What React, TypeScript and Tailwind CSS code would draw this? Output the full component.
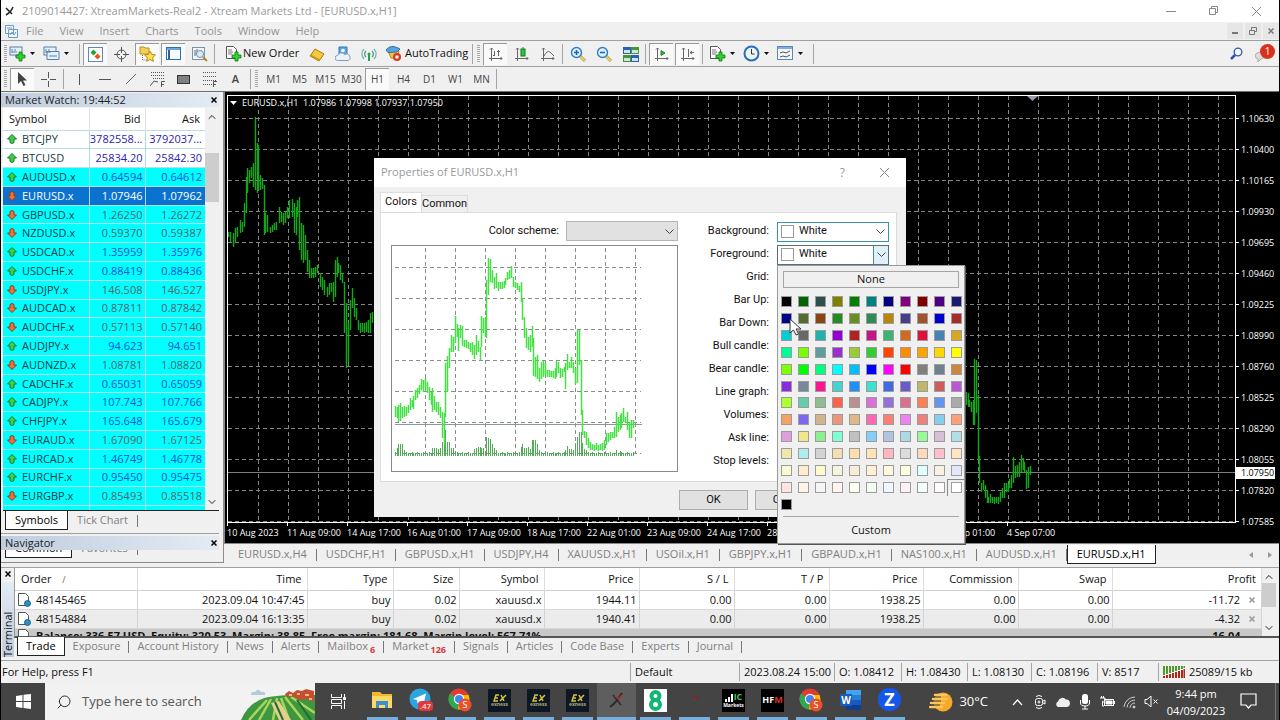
import { useState, type ReactNode } from "react";
import clsx from "clsx";
import { ChevronDown, ChevronUp, Search } from "lucide-react";

type Bar = [x: number, high: number, low: number];

// x, high, low in thirds of a pixel
const MAIN_LEFT: Bar[] = [
  [4, 412, 425], [10, 412, 440], [18, 415, 455], [24, 400, 445], [30, 395, 425], [38, 375, 415], [44, 380, 410], [50, 325, 395],
  [56, 245, 355], [60, 220, 295], [66, 225, 265], [72, 217, 250], [77, 205, 275], [83, 67, 285], [89, 145, 295], [94, 150, 285],
  [99, 240, 285], [105, 250, 283], [110, 270, 420], [115, 355, 415], [121, 360, 410], [128, 395, 415], [134, 390, 410], [141, 385, 405],
  [148, 380, 405], [155, 335, 385], [161, 350, 380], [168, 355, 390], [175, 350, 385], [181, 335, 370], [186, 315, 370], [194, 313, 365],
  [200, 325, 415], [206, 335, 420], [211, 315, 365], [216, 305, 465], [222, 385, 495], [228, 390, 505], [234, 420, 495], [240, 465, 530],
  [246, 495, 550], [252, 520, 550], [258, 520, 550], [264, 515, 545], [271, 510, 535], [278, 535, 575], [284, 545, 585], [291, 555, 600],
  [299, 575, 605], [306, 565, 600], [312, 563, 590], [318, 560, 620], [324, 495, 605], [329, 485, 545], [334, 505, 535], [340, 510, 555],
  [346, 535, 565], [352, 560, 715], [358, 625, 820], [364, 685, 800], [369, 615, 705], [374, 580, 640], [380, 610, 665], [386, 640, 675],
  [392, 675, 705], [399, 685, 713], [406, 685, 710], [412, 685, 713], [418, 680, 710], [424, 675, 715], [430, 653, 715], [436, 650, 685],
];

const MAIN_RIGHT: Bar[] = [
  [48, 890, 930], [53, 895, 935], [58, 915, 935], [63, 920, 950], [68, 915, 990], [73, 793, 990], [78, 795, 955], [83, 900, 1095],
  [88, 1083, 1165], [94, 1165, 1190], [99, 1155, 1185], [105, 1170, 1210], [110, 1185, 1225], [115, 1205, 1225], [120, 1198, 1223],
  [126, 1207, 1225], [133, 1205, 1227], [139, 1207, 1225], [145, 1205, 1227], [151, 1190, 1220], [157, 1180, 1210], [162, 1165, 1210],
  [168, 1165, 1190], [173, 1168, 1190], [178, 1153, 1180], [184, 1140, 1180], [190, 1085, 1165], [196, 1113, 1150], [201, 1110, 1145],
  [207, 1100, 1145], [212, 1080, 1130], [218, 1090, 1125], [223, 1100, 1135], [229, 1125, 1183], [235, 1115, 1180], [241, 1113, 1140],
];

const PREVIEW: Bar[] = [
  [59, 752, 785], [65, 755, 790], [70, 750, 800], [76, 745, 798], [82, 755, 788], [88, 752, 785], [94, 755, 782], [100, 750, 775],
  [105, 728, 765], [110, 735, 755], [115, 722, 762], [121, 705, 735], [127, 698, 730], [133, 690, 718], [139, 672, 705], [145, 675, 712],
  [151, 670, 705], [156, 680, 715], [161, 695, 735], [167, 710, 750], [172, 698, 770], [178, 722, 765], [184, 740, 770], [190, 742, 780],
  [196, 755, 790], [201, 770, 850], [206, 775, 870], [211, 625, 785], [217, 602, 710], [222, 580, 640], [228, 540, 590], [234, 545, 590],
  [239, 482, 565], [245, 508, 545], [250, 520, 588], [256, 510, 550], [262, 512, 572], [268, 555, 575], [273, 555, 580], [279, 560, 582],
  [285, 565, 590], [291, 560, 600], [296, 570, 612], [302, 540, 600], [308, 558, 590], [314, 575, 615], [319, 483, 575], [324, 490, 535],
  [329, 485, 545], [334, 375, 548], [340, 310, 420], [346, 312, 382], [352, 345, 385], [358, 365, 402], [363, 355, 398], [369, 382, 408],
  [375, 380, 402], [380, 382, 402], [386, 378, 398], [391, 368, 390], [397, 352, 375], [403, 345, 372], [409, 332, 370], [414, 365, 395],
  [420, 380, 400], [426, 385, 405], [432, 392, 410], [437, 380, 440], [442, 432, 495], [448, 485, 550], [454, 520, 580], [459, 545, 585],
  [464, 540, 590], [470, 512, 575], [475, 548, 662], [481, 605, 665], [487, 600, 672], [493, 640, 680], [499, 620, 672], [504, 618, 665],
  [510, 625, 660], [516, 645, 665], [522, 645, 665], [528, 648, 665], [534, 648, 668], [539, 640, 672], [544, 618, 665], [549, 620, 655],
  [554, 640, 670], [560, 642, 665], [566, 635, 650], [571, 625, 702], [577, 598, 645], [583, 620, 640], [589, 605, 640], [594, 620, 655],
  [600, 640, 687], [605, 525, 685], [611, 525, 630], [617, 615, 780], [622, 765, 840], [628, 828, 850], [634, 830, 870], [640, 850, 880],
  [646, 862, 885], [652, 868, 885], [658, 870, 888], [664, 865, 885], [669, 870, 888], [675, 868, 885], [681, 865, 887], [687, 855, 885],
  [693, 835, 870], [699, 835, 860], [704, 832, 855], [710, 830, 850], [716, 815, 850], [722, 770, 845], [728, 785, 830], [734, 780, 825],
  [739, 775, 820], [745, 760, 800], [751, 785, 805], [757, 770, 825], [763, 800, 848], [769, 795, 848], [775, 795, 820],
];

// index of the preview bar -> volume height, everything else stays near the baseline
const VOLUMES: Record<number, number> = {
  1: 20, 2: 34, 3: 32, 4: 32, 5: 15, 6: 8, 20: 20, 21: 20, 22: 20, 23: 18, 24: 22, 25: 38, 26: 50, 27: 75, 28: 40, 29: 38, 30: 22, 31: 20,
  32: 10, 42: 18, 43: 20, 44: 24, 45: 24, 46: 20, 47: 20, 49: 55, 50: 50, 51: 48, 52: 32, 53: 20, 54: 15, 67: 25, 68: 34, 69: 22, 70: 20,
  71: 24, 72: 18, 73: 45, 74: 45, 75: 44, 76: 32, 77: 15, 78: 10, 91: 15, 92: 26, 93: 18, 94: 18, 95: 15, 96: 35, 97: 55, 98: 68, 99: 68,
  100: 35, 101: 18, 102: 15, 103: 10, 117: 15, 119: 12,
};

function barPath(bars: Bar[], dx = 0, dy = 0) {
  return bars
    .map(([x, h, l]) => `M${Math.round(x / 3 + dx) + 0.5} ${Math.round(h / 3 + dy)}V${Math.round(l / 3 + dy)}`)
    .join("");
}

const PRICES = [
  "1.10630", "1.10400", "1.10165", "1.09930", "1.09695", "1.09460", "1.09225",
  "1.08990", "1.08760", "1.08525", "1.08290", "1.08055", "1.07820", "1.07585",
];
const TIMES = [
  "10 Aug 2023", "11 Aug 09:00", "14 Aug 17:00", "16 Aug 01:00", "17 Aug 09:00", "18 Aug 17:00", "22 Aug 01:00",
  "23 Aug 09:00", "24 Aug 17:00", "28 Aug 01:00", "29 Aug 09:00", "30 Aug 17:00", "1 Sep 01:00", "4 Sep 07:00",
];

const QUOTES: [string, string, string, boolean][] = [
  ["BTCJPY", "3782558...", "3792037...", true],
  ["BTCUSD", "25834.20", "25842.30", true],
  ["AUDUSD.x", "0.64594", "0.64612", true],
  ["EURUSD.x", "1.07946", "1.07962", false],
  ["GBPUSD.x", "1.26250", "1.26272", false],
  ["NZDUSD.x", "0.59370", "0.59387", false],
  ["USDCAD.x", "1.35959", "1.35976", true],
  ["USDCHF.x", "0.88419", "0.88436", true],
  ["USDJPY.x", "146.508", "146.527", false],
  ["AUDCAD.x", "0.87811", "0.87842", false],
  ["AUDCHF.x", "0.57113", "0.57140", false],
  ["AUDJPY.x", "94.623", "94.651", true],
  ["AUDNZD.x", "1.08781", "1.08820", false],
  ["CADCHF.x", "0.65031", "0.65059", true],
  ["CADJPY.x", "107.743", "107.766", true],
  ["CHFJPY.x", "165.648", "165.679", true],
  ["EURAUD.x", "1.67090", "1.67125", false],
  ["EURCAD.x", "1.46749", "1.46778", true],
  ["EURCHF.x", "0.95450", "0.95475", true],
  ["EURGBP.x", "0.85493", "0.85518", false],
  ["EURJPY.x", "158.100", "158.127", true],
];

const PALETTE =
  "Black DarkGreen DarkSlateGray Olive Green Teal Navy Purple Maroon Indigo MidnightBlue DarkBlue DarkOliveGreen SaddleBrown ForestGreen OliveDrab SeaGreen DarkGoldenrod DarkSlateBlue Sienna MediumBlue Brown DarkTurquoise DimGray LightSeaGreen DarkViolet FireBrick MediumVioletRed MediumSeaGreen Chocolate Crimson SteelBlue Goldenrod MediumSpringGreen LawnGreen CadetBlue DarkOrchid YellowGreen LimeGreen OrangeRed DarkOrange Orange Gold Yellow Chartreuse Lime SpringGreen Aqua DeepSkyBlue Blue Magenta Red Gray SlateGray Peru BlueViolet LightSlateGray DeepPink MediumTurquoise DodgerBlue Turquoise RoyalBlue SlateBlue DarkKhaki IndianRed MediumOrchid GreenYellow MediumAquamarine DarkSeaGreen Tomato RosyBrown Orchid MediumPurple PaleVioletRed Coral CornflowerBlue DarkGray SandyBrown MediumSlateBlue Tan DarkSalmon BurlyWood HotPink Salmon Violet LightCoral SkyBlue LightSalmon Plum Khaki LightGreen Aquamarine Silver LightSkyBlue LightSteelBlue LightBlue PaleGreen Thistle PowderBlue PaleGoldenrod PaleTurquoise LightGray Wheat NavajoWhite Moccasin LightPink Gainsboro PeachPuff Pink Bisque LightGoldenrodYellow BlanchedAlmond LemonChiffon Beige AntiqueWhite PapayaWhip Cornsilk LightYellow LightCyan Linen Lavender MistyRose OldLace WhiteSmoke Seashell Ivory Honeydew AliceBlue LavenderBlush MintCream Snow White Black".split(
    " "
  );

/* ---------- toolbar ---------- */

function Handle() {
  return <span className="mx-[2px] h-[18px] w-[3px] bg-[repeating-linear-gradient(#a8a8a8_0_1px,transparent_1px_2px)]" />;
}

function Sep() {
  return <span className="mx-[2px] h-[20px] w-px bg-[#a5a5a5]" />;
}

function Tool({ label, on, children }: { label: string; on?: boolean; children: ReactNode }) {
  return (
    <button
      type="button"
      aria-label={label}
      className={clsx(
        "mx-px flex h-[22px] w-6 items-center justify-center border-t border-l",
        on ? "border-[#9a9a9a] bg-[#fafafa]" : "border-transparent"
      )}
    >
      {children}
    </button>
  );
}

function DropTool({ label, children }: { label: string; children: ReactNode }) {
  return (
    <button type="button" aria-label={label} className="flex h-[22px] w-[34px] items-center gap-1">
      {children}
      <svg width="5" height="3"><path d="M0 0h5L2.500 3z" fill="#111" /></svg>
    </button>
  );
}

const plus = <path d="M10 7h3v3h3v3h-3v3h-3v-3H7v-3h3z" fill="#2fd22f" stroke="#0a7a14" strokeWidth=".8" />;

function ChartsIcon({ add }: { add?: boolean }) {
  return (
    <svg width="17" height="17" viewBox="0 0 17 17">
      <rect x="1" y="2" width="12" height="8" fill="#e8f1fa" stroke="#5b7fa6" />
      {!add && <path d="M4 6.500h12v8H4z" fill="#e8f1fa" stroke="#5b7fa6" />}
      <path d="M3 4v4M5 5h2M3 7h5M6 11h8" stroke="#4f86b8" />
      {add && plus}
    </svg>
  );
}

function DocPlus() {
  return (
    <svg width="17" height="17" viewBox="0 0 17 17">
      <path d="M1.500 1.500h7l3 3v9h-10z" fill="#fff" stroke="#555" />
      <path d="M3 5h4M3 7h5M3 9h4" stroke="#777" />
      {plus}
    </svg>
  );
}

function AxisIcon({ children }: { children: ReactNode }) {
  return (
    <svg width="15" height="15" viewBox="0 0 15 15" fill="none" stroke="#666">
      <path d="M3.500 1v13M1 11.500h13M2 2.500l1.500-1.500L5 2.500M12.500 10l1.500 1.500-1.500 1.500" />
      {children}
    </svg>
  );
}

function ZoomIcon({ plus: isPlus }: { plus?: boolean }) {
  return (
    <svg width="17" height="17" viewBox="0 0 17 17">
      <path d="M10 10l5 5" stroke="#b8962c" strokeWidth="3" />
      <path d="M10 10l5 5" stroke="#f1db78" strokeWidth="1.500" />
      <circle cx="6.500" cy="6.500" r="5" fill="#dff0fc" stroke="#2b7fc8" strokeWidth="1.400" />
      <path d={isPlus ? "M4 6.500h5M6.500 4v5" : "M4 6.500h5"} stroke="#1766b0" strokeWidth="1.500" />
    </svg>
  );
}

function Toolbars() {
  return (
    <>
      <div className="flex h-[26px] items-center border-b border-[#a0a0a0] pl-px">
        <Handle />
        <DropTool label="New chart"><ChartsIcon add /></DropTool>
        <DropTool label="Profiles"><ChartsIcon /></DropTool>
        <Sep />
        <Tool label="Market watch" on>
          <svg width="15" height="15" viewBox="0 0 15 15">
            <rect x=".5" y=".5" width="14" height="14" fill="#fff" stroke="#5a8ac0" />
            <path d="M5.500 2.500l3 3-3 3-3-3z" fill="#1fa82b" /><path d="M9.500 6.500l3 3-3 3-3-3z" fill="#e2571f" />
          </svg>
        </Tool>
        <Tool label="Data window">
          <svg width="15" height="15" viewBox="0 0 15 15" fill="none" stroke="#555">
            <circle cx="7.500" cy="7.500" r="4.500" /><path d="M7.500 0v6M7.500 9v6M0 7.500h6M9 7.500h6" />
          </svg>
        </Tool>
        <Tool label="Navigator" on>
          <svg width="17" height="16" viewBox="0 0 17 16">
            <path d="M1 1h4l1 1h4v6H1z" fill="#f3cf55" stroke="#b98f1d" /><path d="M3.500 9v5H8" stroke="#777" fill="none" strokeDasharray="1 1" />
            <path d="M11 5l1.700 3.400 3.800.5-2.800 2.600.7 3.800-3.400-1.800L7.600 15.300l.7-3.800L5.500 8.900l3.800-.5z" fill="#fbe04b" stroke="#b58a14" />
          </svg>
        </Tool>
        <Tool label="Terminal" on>
          <svg width="15" height="14" viewBox="0 0 15 14">
            <rect x=".5" y=".5" width="14" height="12" fill="#f4faff" stroke="#2f6fb0" /><path d="M1 2h13" stroke="#6fa5d8" strokeWidth="2" /><path d="M2 3h2v9H2z" fill="#3a5f88" />
          </svg>
        </Tool>
        <Tool label="Strategy tester">
          <svg width="16" height="16" viewBox="0 0 16 16" fill="none" stroke="#7b92a8">
            <rect x=".5" y="1.500" width="12" height="12" fill="#f1f5f9" /><path d="M3 4v6M5 3v5M9 4v3" stroke="#666" /><circle cx="8" cy="8" r="3.500" fill="#d8ebf8" /><path d="M11 11l4 4" stroke="#b08a26" strokeWidth="2" />
          </svg>
        </Tool>
        <Sep />
        <button type="button" className="flex h-[22px] w-[86px] items-center gap-px pl-2 whitespace-nowrap">
          <DocPlus />
          New Order
        </button>
        <Tool label="MetaEditor">
          <svg width="16" height="15" viewBox="0 0 16 15">
            <path d="M1 9L6 2l9 5-5 7z" fill="#f5c93a" stroke="#a77a14" /><path d="M1 9l9 5v-2L2 7.500z" fill="#c99822" />
          </svg>
        </Tool>
        <Tool label="Cloud">
          <svg width="16" height="16" viewBox="0 0 16 16">
            <path d="M4 1h8v8H4z" fill="#5aa9e6" stroke="#2b78ba" /><circle cx="8" cy="4.500" r="1.800" fill="#fff" />
            <path d="M2.500 14.500a2.500 2.500 0 010-5 4 4 0 017-1 3 3 0 014 6z" fill="#e9f0f8" stroke="#7f9dbd" />
          </svg>
        </Tool>
        <Tool label="Signals">
          <svg width="16" height="15" viewBox="0 0 16 15" fill="none" stroke="#7ab3b5" strokeWidth="1.300">
            <path d="M3 12A7 7 0 013 2M13 12a7 7 0 000-10" /><path d="M5 10a4 4 0 010-6M11 10a4 4 0 000-6" stroke="#4d9a8c" />
            <circle cx="8" cy="7" r="1.500" fill="#2da13f" stroke="none" /><path d="M8 8v6" stroke="#2da13f" strokeWidth="2" />
          </svg>
        </Tool>
        <button type="button" className="flex h-[22px] w-[89px] items-center gap-[3px] pl-1 whitespace-nowrap">
          <svg width="17" height="17" viewBox="0 0 17 17">
            <path d="M3 6h11l-2 7H6z" fill="#f0c548" stroke="#b48a1c" /><path d="M1 5q3-4 7-3.500T15 4l-3 3-9 .5z" fill="#5ba3dc" stroke="#2d6da5" />
            <circle cx="12" cy="12" r="4" fill="#da3a1b" /><rect x="10.500" y="10.500" width="3" height="3" fill="#fff" />
          </svg>
          AutoTrading
        </button>
        <Sep />
        <Handle />
        <Tool label="Bar chart" on><AxisIcon><path d="M6.500 4v5M5 8.500h2M10.500 3v6M9 4.500h3" /></AxisIcon></Tool>
        <Tool label="Candlesticks"><AxisIcon><rect x="7" y="2" width="4" height="7" fill="#2fc845" stroke="#0b7c1c" /><path d="M9 0v2" /></AxisIcon></Tool>
        <Tool label="Line chart"><AxisIcon><path d="M4 9q3-6 6-4l4 4" /></AxisIcon></Tool>
        <Sep />
        <Tool label="Zoom in"><ZoomIcon plus /></Tool>
        <Tool label="Zoom out"><ZoomIcon /></Tool>
        <Tool label="Tile windows">
          <svg width="16" height="15" viewBox="0 0 16 15">
            <path d="M0 0h8v7H0zM8 8h8v7H8z" fill="#2c5fae" /><path d="M8 0h8v7H8zM0 8h8v7H0z" fill="#49962e" />
            <path d="M1 3h6v3H1zM9 3h6v3H9zM1 11h6v3H1zM9 11h6v3H9z" fill="#cfe3ee" />
          </svg>
        </Tool>
        <Sep />
        <Tool label="Auto scroll" on><AxisIcon><path d="M7 3.500L11 6l-4 2.500z" fill="#3cae4b" stroke="#22803a" /></AxisIcon></Tool>
        <Tool label="Chart shift" on><AxisIcon><path d="M8.500 2v8M14 5.500h-4M12 4l-2 1.500L12 7" /></AxisIcon></Tool>
        <Sep />
        <span className="w-1" />
        <DropTool label="Indicators"><DocPlus /></DropTool>
        <DropTool label="Periods">
          <svg width="17" height="17" viewBox="0 0 17 17">
            <circle cx="8.500" cy="8.500" r="7" fill="#eaf4fc" stroke="#2c6fb3" strokeWidth="2" /><path d="M8.500 4v5h3" stroke="#333" fill="none" />
          </svg>
        </DropTool>
        <DropTool label="Templates">
          <svg width="17" height="15" viewBox="0 0 17 15" fill="none">
            <rect x=".5" y=".5" width="15" height="13" fill="#f3f8fc" stroke="#5d87b0" /><path d="M1 2h14" stroke="#7fb0dc" strokeWidth="2" /><path d="M3 7l3-1 3 1 4-2M3 11l3-1 3 1 4-2" stroke="#555" />
          </svg>
        </DropTool>
        <Sep />
        <span className="flex-1" />
        <button type="button" aria-label="Search" className="mr-3">
          <svg width="13" height="13" viewBox="0 0 13 13" fill="none" stroke="#2f56b0">
            <circle cx="8" cy="5" r="3.800" fill="#f3f7ff" strokeWidth="1.300" /><path d="M5 8l-4 4" strokeWidth="2.500" />
          </svg>
        </button>
        <button type="button" aria-label="Notifications" className="relative mr-1 h-5 w-5">
          <svg width="20" height="20" viewBox="0 0 20 20">
            <path d="M0 12a5 4 0 018-3l2 4-4 2-3 3v-3q-3-1-3-3z" fill="#ddd" stroke="#aaa" />
          </svg>
          <span className="absolute top-0 right-0 flex h-[15px] w-[15px] items-center justify-center rounded-full bg-[#d8321c] text-[10px] text-white">1</span>
        </button>
      </div>

      <div className="flex h-[25px] items-center border-b border-[#6d6d6d] pl-px text-[10px] text-[#444]">
        <Handle />
        <Tool label="Cursor" on>
          <svg width="11" height="15" viewBox="0 0 11 15"><path d="M1 0v12l3-3 2.500 5 2-1L6 8.500h4z" fill="#444" /></svg>
        </Tool>
        <Tool label="Crosshair">
          <svg width="15" height="15" stroke="#555"><path d="M7.500 0v6M7.500 9v6M0 7.500h6M9 7.500h6" /></svg>
        </Tool>
        <Sep />
        <Tool label="Vertical line"><svg width="15" height="13" stroke="#555"><path d="M7.500 1v11" /></svg></Tool>
        <Tool label="Horizontal line"><svg width="13" height="13" stroke="#555"><path d="M0 6.500h12" /></svg></Tool>
        <Tool label="Trendline"><svg width="13" height="13" stroke="#666"><path d="M1 11L11 1" /></svg></Tool>
        <Tool label="Channel">
          <svg width="16" height="17" viewBox="0 0 16 17" stroke="#555" fill="none"><path d="M1 1.500h14M1 4.500h14M3 7.500h12" strokeDasharray="1 1" /><path d="M0 15l4-5 4 1M11.500 16v-5.500H15M11 13.500h3" /></svg>
        </Tool>
        <Tool label="Rectangle"><svg width="13" height="9"><rect x=".5" y=".5" width="12" height="8" fill="#808080" stroke="#333" /></svg></Tool>
        <Tool label="Fibonacci">
          <svg width="16" height="17" viewBox="0 0 16 17" stroke="#555" fill="none"><path d="M1 1.500h13M1 5.500h13M1 9.500h13M1 13.500h9" strokeDasharray="1 1" /><path d="M11.500 16v-5.500H15M11 13.500h3" /></svg>
        </Tool>
        <Tool label="Text"><span className="text-[11px] font-semibold">A</span></Tool>
        <Sep />
        <Handle />
        {["M1", "M5", "M15", "M30", "H1", "H4", "D1", "W1", "MN"].map((p) => (
          <Tool key={p} label={p} on={p === "H1"}>{p}</Tool>
        ))}
        <Sep />
      </div>
    </>
  );
}

/* ---------- shared bits ---------- */

function PanelTitle({ children }: { children: ReactNode }) {
  return (
    <div className="flex h-[14px] items-center justify-between bg-linear-to-r from-[#bfcddf] to-[#e4ebf3] pr-[2px] pl-1 text-[11px] leading-[14px] text-[#222]">
      {children}
      <button type="button" aria-label="Close panel"><CloseX /></button>
    </div>
  );
}

function CloseX({ color = "#000" }: { color?: string }) {
  return <svg width="6" height="6" stroke={color} strokeWidth="1.500"><path d="M.5 .5l5 5M5.500 .5l-5 5" /></svg>;
}

type TabsProps = { items: string[]; active: string; badges?: Record<string, string>; tight?: boolean };

function Tabs({ items, active, badges = {}, tight }: TabsProps) {
  return (
    <div role="tablist" className="flex h-[19px] shrink-0 items-stretch text-[#808080]">
      {items.map((t) =>
        t === active ? (
          <button key={t} role="tab" aria-selected type="button" className={clsx("border-x border-b border-[#222] bg-white text-black", tight ? "px-2" : "px-[9px]")}>
            {t}
          </button>
        ) : (
          <button
            key={t}
            role="tab"
            type="button"
            className={clsx("flex items-center after:h-3 after:w-px after:bg-[#777]", tight ? "pl-2 after:ml-2" : "pl-[9px] after:ml-[9px]")}
          >
            {t}
            {badges[t] && <span className="ml-[2px] pt-[6px] text-[9px] font-bold text-[#d23a3a]">{badges[t]}</span>}
          </button>
        )
      )}
    </div>
  );
}

function ScrollBar({ thumb }: { thumb: string }) {
  return (
    <div className="flex w-[14px] shrink-0 flex-col items-center bg-[#f0f0f0] text-[#222]">
      <ChevronUp size={12} className="mt-[3px] shrink-0" />
      <span className={clsx("w-full bg-[#cdcdcd]", thumb)} />
      <ChevronDown size={12} className="mt-auto mb-[2px] shrink-0" />
    </div>
  );
}

/* ---------- market watch ---------- */

function MarketWatch() {
  return (
    <aside className="mb-1 flex w-[223px] shrink-0 flex-col border-r border-b border-[#8c8c8c] pt-px pr-1">
      <PanelTitle>Market Watch: 19:44:52</PanelTitle>
      <div className="mt-px ml-[2px] flex min-h-0 flex-1 overflow-hidden border-b border-[#222] bg-white">
        <div className="min-w-0 flex-1 overflow-hidden">
          <table className="h-[416px] w-full table-fixed border-collapse text-[11px] leading-[16px]">
            <thead>
              <tr className="h-[22px]">
                <th className="w-[86px] border-r border-[#e2e2e2] pl-[6px] text-left font-normal">Symbol</th>
                <th className="w-[56px] border-r border-[#e2e2e2] pr-1 text-right font-normal">Bid</th>
                <th className="pr-[5px] text-right font-normal">Ask</th>
              </tr>
            </thead>
            <tbody>
              {QUOTES.map(([symbol, bid, ask, up], i) => {
                const selected = symbol === "EURUSD.x";
                return (
                  <tr
                    key={symbol}
                    className={clsx(
                      "border-t border-[#b9dfe4]",
                      selected ? "bg-[#0a73d0] text-white" : i < 2 ? "bg-white text-[#2a22b0]" : up ? "bg-[#00ffff] text-[#0c50d8]" : "bg-[#00ffff] text-[#54656c]"
                    )}
                  >
                    <td className={clsx("border-r border-[#a9dfe4] p-0", !selected && "text-[#163c46]")}>
                      <span className="flex items-center gap-[5px] pl-1">
                        <svg width="10" height="10" viewBox="0 0 10 10">
                          <path
                            d={up ? "M5 .5L9.500 5H7v3.500L5 9.500 3 8.500V5H.5z" : "M5 9.500L9.500 5H7V1.500L5 .5 3 1.500V5H.5z"}
                            fill={up ? "#3fd04a" : "#f0703a"}
                            stroke={up ? "#14752a" : "#8a3d1d"}
                          />
                        </svg>
                        {symbol}
                      </span>
                    </td>
                    <td className="border-r border-[#a9dfe4] p-0 pr-[2px] text-right">{bid}</td>
                    <td className="p-0 pr-[3px] text-right">{ask}</td>
                  </tr>
                );
              })}
            </tbody>
          </table>
        </div>
        <ScrollBar thumb="mt-[30px] h-[49px]" />
      </div>
      <div className="ml-[4px] h-[22px]">
        <Tabs items={["Symbols", "Tick Chart"]} active="Symbols" />
      </div>
      <div className="border-t border-[#a0a0a0] pt-[2px]">
        <PanelTitle>Navigator</PanelTitle>
        <div className="ml-[4px] flex h-[12px] flex-col justify-end overflow-hidden pb-[4px]">
          <Tabs items={["Common", "Favorites"]} active="Common" />
        </div>
      </div>
    </aside>
  );
}

/* ---------- chart ---------- */

function ChartWindow() {
  return (
    <div className="flex min-h-0 flex-1 flex-col border-b border-l border-[#8a8a8a] bg-black pt-[3px] pl-[2px] text-[9px] text-white">
      <div className="flex min-h-0 flex-1">
        <div className="relative min-w-0 flex-1 border border-white">
          <svg className="absolute h-full w-full" fill="none">
            <g stroke="#858585" strokeDasharray="4 3">
              {Array.from({ length: 33 }, (_, i) => (
                <line key={i} x1={30.5 + i * 30} x2={30.5 + i * 30} y1="0" y2="100%" />
              ))}
              {PRICES.map((p, i) => (
                <line key={p} y1={22.5 + i * 31} y2={22.5 + i * 31} x1="0" x2="100%" />
              ))}
            </g>
            <line x1="0" x2="100%" y1="376.5" y2="376.5" stroke="#77827c" />
            <g stroke="#12a81a" strokeWidth="1.4">
              <path d={barPath(MAIN_LEFT, -1, -1)} />
              <path d={barPath(MAIN_RIGHT, 722, -1)} />
            </g>
            <path d="M799 0h11l-5.500 5z" fill="#9a9aa8" />
          </svg>
          <p className="relative flex items-center gap-[5px] px-[2px] text-[9px] leading-[13px]">
            <svg width="7" height="4"><path d="M0 0h7L3.500 4z" fill="#fff" /></svg>
            <span className="whitespace-pre">EURUSD.x,H1  1.07986 1.07998 1.07937 1.07950</span>
          </p>
        </div>
        <ul className="relative w-[43px] shrink-0 pt-[8px]">
          {PRICES.map((p) => (
            <li key={p} className="flex h-[31px] items-center gap-[2px] before:h-px before:w-[3px] before:bg-white">
              {p}
            </li>
          ))}
          <li className="absolute top-[372px] left-0 h-[12px] w-[39px] bg-white pl-[5px] leading-[12px] text-black">1.07950</li>
        </ul>
      </div>
      <ol className="flex h-[20px] overflow-hidden pr-[42px] leading-[14px] whitespace-nowrap">
        {TIMES.map((t) => (
          <li key={t} className="w-[60px] shrink-0 before:block before:h-[3px] before:w-px before:bg-white">{t}</li>
        ))}
      </ol>
    </div>
  );
}

/* ---------- properties dialog ---------- */

function ColorSelect({ id, value, tone, hot }: { id: string; value?: string; tone: string; hot?: boolean }) {
  return (
    <span className={clsx("grid h-[20px] w-[112px] items-center border", tone)}>
      <select id={id} defaultValue={value} className={clsx("col-start-1 row-start-1 h-full w-full appearance-none outline-none", value && "pl-[21px]")}>
        {value && <option>{value}</option>}
      </select>
      {value && <span className="pointer-events-none col-start-1 row-start-1 ml-[3px] h-[13px] w-[13px] border border-[#999] bg-white" />}
      <span className={clsx("pointer-events-none col-start-1 row-start-1 flex h-full w-[15px] items-center justify-center justify-self-end", hot && "border-l border-[#4a8a94] bg-[#dff0f8]")}>
        <svg width="9" height="5" fill="none" stroke="#444"><path d="M.5 .5l4 4 4-4" /></svg>
      </span>
    </span>
  );
}

function PalettePopup() {
  return (
    <div className="absolute top-full left-0 z-20 flex h-[279px] w-[188px] flex-col border border-[#9a9a9a] bg-[#f0f0f0] pt-[5px] font-['Open_Sans','Noto_Sans',sans-serif] text-[11px] shadow-[1px_1px_0_#555]">
      <button type="button" className="mx-[5px] h-[17px] border border-[#a5a5a5] leading-[14px]">None</button>
      <div className="mt-[5px] grid h-[220px] grid-cols-11 grid-rows-13">
        {PALETTE.map((c, i) => (
          <button
            key={i}
            type="button"
            aria-label={c}
            className={clsx("flex items-center justify-center border-t border-l", i === 131 ? "border-[#888]" : "border-transparent")}
          >
            <span className="h-[11px] w-[11px] border border-[#9c9c9c]" style={{ backgroundColor: c }} />
          </button>
        ))}
      </div>
      <span className="mx-[5px] mt-[3px] h-px bg-[#a8a8a8]" />
      <button type="button" className="flex-1 pt-px">Custom</button>
      <svg className="pointer-events-none absolute top-[52px] left-[11px]" width="13" height="18" viewBox="0 0 13 18">
        <path d="M1 1v14l3.500-3 2.500 5 2.500-1L7.200 11H12z" fill="#fff" stroke="#333" />
      </svg>
    </div>
  );
}

const FIELDS = ["Background", "Foreground", "Grid", "Bar Up", "Bar Down", "Bull candle", "Bear candle", "Line graph", "Volumes", "Ask line", "Stop levels"];

function Preview() {
  const volumes: Bar[] = PREVIEW.map(([x], i) => [x, 900 - (VOLUMES[i] ?? (i % 3 ? 5 : 8)), 902]);
  return (
    <svg width="285" height="225" className="block" fill="none">
      <g stroke="#8c8c8c" strokeDasharray="4 3">
        {[0, 1, 2, 3, 4, 5, 6, 7].map((i) => <path key={i} d={`M${33.5 + i * 30} 2V208`} />)}
        {[0, 1, 2, 3, 4, 5, 6].map((i) => <path key={i} d={`M3 ${21.5 + i * 31}H249`} />)}
      </g>
      <path d="M3 178.500H250" stroke="#8a9a9a" />
      <path d={barPath(volumes, -17, -91)} stroke="#4fae55" />
      <path d={barPath(PREVIEW, -17, -91)} stroke="#45e045" strokeWidth="1.5" />
    </svg>
  );
}

function PropertiesDialog() {
  return (
    <section role="dialog" aria-label="Properties of EURUSD.x,H1" className="absolute top-[66px] left-[150px] z-10 w-[532px] bg-[#f0f0f0] pb-[7px] font-['Liberation_Sans_Narrow','Roboto',sans-serif] text-[11px] text-[#111]">
      <header className="flex h-[29px] items-center bg-white pr-4 pl-[7px] font-['Open_Sans','Noto_Sans',sans-serif] text-[#999]">
        <h2 className="flex-1">Properties of EURUSD.x,H1</h2>
        <button type="button" aria-label="Help" className="mr-[34px] text-xs">?</button>
        <button type="button" aria-label="Close"><svg width="11" height="11" stroke="#888"><path d="M1 1l9 9M10 1l-9 9" /></svg></button>
      </header>
      <div role="tablist" className="flex h-[25px] items-end pl-[6px]">
        <button type="button" role="tab" aria-selected className="h-[20px] w-[42px] border-x border-t border-[#ddd] bg-white">Colors</button>
        <button type="button" role="tab" className="h-[17px] w-[46px] border-t border-r border-[#ddd]">Common</button>
      </div>
      <div className="mr-[9px] ml-[6px] flex h-[270px] border border-[#dcdcdc] bg-white pt-[7px] pl-[10px]">
        <div className="flex w-[287px] flex-col">
          <div className="mt-px flex items-center justify-end gap-[7px]">
            <label htmlFor="scheme">Color scheme:</label>
            <ColorSelect id="scheme" tone="border-[#b5b5b5] bg-[#e1e1e1]" />
          </div>
          <div className="mt-1 border border-[#8a8a8a]"><Preview /></div>
        </div>
        <div className="ml-[5px] flex w-[206px] flex-col">
          {FIELDS.map((f, i) => (
            <div key={f} className="relative flex h-[23px] items-center justify-end gap-2">
              <label htmlFor={`c-${i}`}>{f}:</label>
              <div className="relative">
                <ColorSelect
                  id={`c-${i}`}
                  value={i < 2 ? "White" : undefined}
                  tone={i === 0 ? "border-[#3a93a8]" : i === 1 ? "border-[#56707a]" : "border-[#aaa]"}
                  hot={i === 1}
                />
                {i === 1 && <PalettePopup />}
              </div>
            </div>
          ))}
        </div>
      </div>
      <div className="mt-2 flex justify-end gap-[7px] pr-[82px]">
        <button type="button" className="h-[20px] w-[69px] border border-[#adadad] bg-[#e1e1e1]">OK</button>
        <button type="button" className="h-[20px] w-[69px] border border-[#adadad] bg-[#e1e1e1]">Cancel</button>
      </div>
    </section>
  );
}

const CHART_TABS = [
  "EURUSD.x,H4", "USDCHF,H1", "GBPUSD.x,H1", "USDJPY,H4", "XAUUSD.x,H1", "USOil.x,H1",
  "GBPJPY.x,H1", "GBPAUD.x,H1", "NAS100.x,H1", "AUDUSD.x,H1", "EURUSD.x,H1",
];

/* ---------- terminal ---------- */

const ORDERS = [
  ["48145465", "2023.09.04 10:47:45", "buy", "0.02", "xauusd.x", "1944.11", "0.00", "0.00", "1938.25", "0.00", "0.00", "-11.72"],
  ["48154884", "2023.09.04 16:13:35", "buy", "0.02", "xauusd.x", "1940.41", "0.00", "0.00", "1938.25", "0.00", "0.00", "-4.32"],
];

function OrderIcon() {
  return (
    <svg width="13" height="14" viewBox="0 0 13 14">
      <path d="M.5 .5h7l3 3v9H.5z" fill="#fff" stroke="#555" /><circle cx="9.500" cy="10.500" r="3" fill="#2f8fc4" stroke="#1c648d" />
    </svg>
  );
}

function Terminal() {
  const head = "h-[22px] border-r border-[#dedede] pr-[5px] text-right font-normal";
  return (
    <section className="flex h-[93px] shrink-0 border-t border-[#a0a0a0] text-[11px]">
      <div className="flex w-[13px] shrink-0 flex-col items-center pt-[2px]">
        <button type="button" aria-label="Close terminal" className="flex h-2 items-center"><CloseX /></button>
        <span className="mt-1 mb-[3px] flex-1 rotate-180 bg-linear-to-b from-[#bfcddf] to-[#e4ebf3] text-left leading-[12px] [writing-mode:vertical-rl]">Terminal</span>
      </div>
      <div className="flex min-w-0 flex-1 flex-col">
        <div className="flex h-[70px] overflow-hidden border-b-2 border-l border-[#555] border-l-[#999] bg-white">
          <table className="w-full table-fixed border-collapse self-start">
            <thead>
              <tr className="border-b border-[#cfcfcf]">
                <th className="h-[22px] w-[122px] border-r border-[#dedede] pl-[6px] text-left font-normal">Order <span className="ml-2 text-[9px] text-[#666]">/</span></th>
                <th className={clsx(head, "w-[170px]")}>Time</th>
                <th className={clsx(head, "w-[86px]")}>Type</th>
                <th className={clsx(head, "w-[66px]")}>Size</th>
                <th className={clsx(head, "w-[85px]")}>Symbol</th>
                <th className={clsx(head, "w-[95px]")}>Price</th>
                <th className={clsx(head, "w-[95px]")}>S / L</th>
                <th className={clsx(head, "w-[95px]")}>T / P</th>
                <th className={clsx(head, "w-[94px]")}>Price</th>
                <th className={clsx(head, "w-[95px]")}>Commission</th>
                <th className={clsx(head, "w-[94px]")}>Swap</th>
                <th className={head}>Profit</th>
              </tr>
            </thead>
            <tbody>
              {ORDERS.map((row, r) => (
                <tr key={row[0]} className={clsx("h-[19px] border-b border-[#d8d8d8]", r % 2 && "bg-[#ececec]")}>
                  {row.map((cell, i) => (
                    <td key={i} className={clsx("border-r border-[#d4d4d4] p-0 leading-[16px]", i === 0 ? "pl-[3px]" : "pr-[2px] text-right")}>
                      {i === 0 ? (
                        <span className="flex items-center gap-[5px]"><OrderIcon />{cell}</span>
                      ) : i === 11 ? (
                        <span className="flex items-center justify-end gap-[9px] pr-[4px]">
                          {cell}
                          <button type="button" aria-label="Close order"><CloseX color="#999" /></button>
                        </span>
                      ) : (
                        cell
                      )}
                    </td>
                  ))}
                </tr>
              ))}
              <tr className="bg-[#c8c8c8] font-bold">
                <td colSpan={11} className="p-0 pl-[3px] leading-[14px]">
                  <span className="flex items-center gap-[5px]"><OrderIcon />Balance: 336.57 USD&nbsp; Equity: 320.53&nbsp; Margin: 38.85&nbsp; Free margin: 181.68&nbsp; Margin level: 567.71%</span>
                </td>
                <td className="p-0 pr-[21px] text-right leading-[14px]">-16.04</td>
              </tr>
            </tbody>
          </table>
          <ScrollBar thumb="h-[24px] shrink-0" />
          <span className="w-[3px] shrink-0 bg-[#f0f0f0]" />
        </div>
        <div className="-mt-px pl-[3px]">
          <Tabs
            tight
            items={["Trade", "Exposure", "Account History", "News", "Alerts", "Mailbox", "Market", "Signals", "Articles", "Code Base", "Experts", "Journal"]}
            active="Trade"
            badges={{ Mailbox: "6", Market: "126" }}
          />
        </div>
      </div>
    </section>
  );
}

function StatusBar() {
  const cell = "flex h-[18px] shrink-0 items-center border-l border-[#a5a5a5] pl-[4px]";
  return (
    <footer className="flex h-[23px] shrink-0 items-center border-t border-[#a0a0a0] text-[11px]">
      <span className="flex-1 pl-px">For Help, press F1</span>
      <span className={clsx(cell, "w-[109px]")}>Default</span>
      <span className={clsx(cell, "w-[95px]")}>2023.08.24 15:00</span>
      <span className={clsx(cell, "w-[67px]")}>O: 1.08412</span>
      <span className={clsx(cell, "w-[66px]")}>H: 1.08430</span>
      <span className={clsx(cell, "w-[64px]")}>L: 1.08130</span>
      <span className={clsx(cell, "w-[66px]")}>C: 1.08196</span>
      <span className={clsx(cell, "w-[61px]")}>V: 8517</span>
      <span className={clsx(cell, "w-[121px] gap-1")}>
        <svg width="22" height="12" strokeWidth="2">
          <path d="M1 0v9M4 0v8M7 0v7M10 0v6M13 0v5M16 0v4M19 0v3M21.500 0v2" stroke="#4f9a2c" />
          <path d="M1 10v2M4 9v3M7 8v4M10 7v5M13 6v6M16 5v7M19 4v8M21.500 3v9" stroke="#b3261a" />
        </svg>
        25089/15 kb
      </span>
    </footer>
  );
}

/* ---------- windows taskbar ---------- */

function Chrome() {
  return (
    <svg width="25" height="24" viewBox="0 0 25 24">
      <circle cx="11" cy="11" r="10.500" fill="#e33b2e" />
      <path d="M11 11L1.900 5.700A10.500 10.500 0 0010 21.500z" fill="#2da94f" /><path d="M11 11l-1 10.500A10.500 10.500 0 0020.500 7H11z" fill="#fdbd00" />
      <circle cx="11" cy="11" r="5.200" fill="#fff" /><circle cx="11" cy="11" r="4" fill="#4285f4" />
      <circle cx="17" cy="17" r="6.500" fill="#e8512a" />
      <text x="17" y="20" textAnchor="middle" fontSize="9" fill="#fff">S</text>
    </svg>
  );
}

function Exness() {
  return (
    <span className="flex h-[23px] w-[23px] flex-col items-center justify-center bg-[#0d1824] font-bold text-[#d9c23c]">
      <svg width="14" height="8" viewBox="0 0 14 8" fill="none" stroke="#d9c23c" strokeWidth="1.500">
        <path d="M6 1H3L1 7h4M2.500 4H5M7 7l6-6M8 1l3 6" />
      </svg>
      <span className="text-[5px] leading-[5px] text-[#a8a878]">exness</span>
    </span>
  );
}

const APPS: [string, ReactNode][] = [
  ["File Explorer", <svg width="21" height="18" viewBox="0 0 21 18"><path d="M0 1h8l2 2h10v14H0z" fill="#f5b62e" /><path d="M0 5h20v12H0z" fill="#ffd967" /><path d="M4 17v-7h12v7h-3v-3H7v3z" fill="#3c8fd1" /></svg>],
  ["Telegram", <svg width="25" height="24" viewBox="0 0 25 24"><circle cx="11" cy="11" r="10.500" fill="#2ca5e0" /><path d="M4 11l13-5.500-2.500 11-4-3-2 2-.5-3.500z" fill="#fff" /><rect x="9" y="13" width="15" height="10" rx="4" fill="#e0383c" /><text x="16.500" y="21" textAnchor="middle" fontSize="8" fill="#fff">.47</text></svg>],
  ["Chrome", <Chrome />],
  ["Exness terminal 1", <Exness />],
  ["Exness terminal 2", <Exness />],
  ["Exness terminal 3", <Exness />],
  ["Xtream Markets", <svg width="20" height="20" viewBox="0 0 20 20"><path d="M3 17Q10 12 15 3" stroke="#2b2b2b" strokeWidth="2" fill="none" /><path d="M6 5l8 10" stroke="#2b2b2b" strokeWidth="1.500" /><path d="M8 6l4 3 3-4" stroke="#b5303a" strokeWidth="1.500" fill="none" /></svg>],
  ["Deriv", <span className="flex h-[23px] w-[23px] items-center justify-center bg-white"><svg width="19" height="21" viewBox="0 0 19 21" fill="none" stroke="#12b574" strokeWidth="4"><circle cx="9.500" cy="6" r="4" /><circle cx="9.500" cy="14.500" r="4.500" /></svg></span>],
  ["Market", <svg width="20" height="20" viewBox="0 0 20 20"><path d="M8 6l5 3-4 1z" fill="#a3272c" /><path d="M8 5l3 4 3-2" stroke="#7a2227" fill="none" /></svg>],
  ["IC Markets", <span className="flex h-[23px] w-[23px] flex-col items-center justify-center bg-black text-[9px] leading-[10px] font-bold text-[#45c35a]"><span className="flex items-end gap-px"><svg width="8" height="8" fill="#fff"><path d="M0 5h2v3H0zM3 3h2v5H3zM6 0h2v8H6z" /></svg>IC</span><span className="text-[5px] leading-[6px] text-white">Markets</span></span>],
  ["HFM", <span className="flex h-[23px] w-[23px] items-center justify-center bg-black text-[9px] font-bold text-white">HF<span className="text-[#e02b2b]">M</span></span>],
  ["Chrome profile", <Chrome />],
  ["Word", <svg width="22" height="20" viewBox="0 0 22 20"><path d="M6 0h15v5H6z" fill="#41a5ee" /><path d="M6 5h15v5H6z" fill="#2b7cd3" /><path d="M6 10h15v5H6z" fill="#185abd" /><path d="M6 15h15v5H6z" fill="#103f91" /><rect y="4" width="12" height="12" fill="#185abd" /><text x="6" y="14" textAnchor="middle" fontSize="10" fontWeight="bold" fill="#fff">W</text></svg>],
  ["Zoom", <svg width="25" height="24" viewBox="0 0 25 24"><rect x="1" width="23" height="23" rx="11" fill="#1557e8" /><text x="12.500" y="18" textAnchor="middle" fontSize="18" fontWeight="bold" fill="#fff">Z</text></svg>],
];

function Taskbar() {
  return (
    <nav className="flex h-[37px] shrink-0 bg-[#444] text-white">
      <button type="button" aria-label="Start" className="flex w-[44px] items-center justify-center">
        <svg width="15" height="15" viewBox="0 0 15 15" fill="#fff"><path d="M0 2l6.500-1v6H0zM7.500 .8L15 0v7H7.500zM0 8h6.500v6L0 13zM7.500 8H15v7l-7.500-1z" /></svg>
      </button>
      <label className="flex w-[270px] items-center overflow-hidden bg-[#f2f2f2] pl-[11px] text-[#333]">
        <Search size={16} strokeWidth={1.5} className="-scale-x-100" />
        <input type="text" placeholder="Type here to search" className="ml-[10px] w-[150px] text-[13px] outline-none placeholder:text-[#555]" />
        <svg width="78" height="37" viewBox="0 0 78 37" className="ml-auto shrink-0">
          <path d="M14 12q0-4 4-3 3-5 6 0 5-1 4 3z" fill="#b4cbdc" />
          <path d="M4 37Q14 14 40 13q26-3 38-1v25z" fill="#3f9640" />
          <path d="M12 37l18-20M22 37l12-21M36 37l4-22M52 37L44 15M66 37L48 14M78 30L54 14" stroke="#a9d65a" strokeWidth="2.500" />
          <path d="M42 37L34 20l8-2 12 19z" fill="#e5cf8c" /><path d="M46 37L38 19M74 37L60 17" stroke="#226c33" strokeWidth="2" />
          <path d="M48 11l4-3 4 2 4-3 5 1 4-2 8 2v11l-8-3-6 1-6-3-8-1z" fill="#c5502f" /><path d="M52 12h3M60 11h3M68 12h4M72 16h3" stroke="#f0b488" strokeWidth="2" />
        </svg>
      </label>
      <button type="button" aria-label="Task view" className="flex w-[48px] items-center justify-center">
        <svg width="16" height="15" viewBox="0 0 16 15" fill="none" stroke="#fff"><path d="M.5 0v3.500h10V0M.5 15v-3.500h10V15M.5 5.500h10v4H.5zM13.500 0v3M13.500 7v8" /><path d="M12.500 3.500h2v2h-2z" fill="#fff" /></svg>
      </button>
      {APPS.map(([name, icon]) => (
        <button
          key={name}
          type="button"
          aria-label={name}
          className={clsx("flex w-[39px] flex-col items-center", name === "Xtream Markets" && "bg-[#5e5e5e]")}
        >
          <span className="flex flex-1 items-center">{icon}</span>
          <span className={clsx("h-[3px] bg-[#76aede]", name === "Xtream Markets" ? "w-full" : "w-[31px]")} />
        </button>
      ))}
      <span className="flex-1" />
      <button type="button" className="mr-[22px] flex items-center gap-[6px] text-[13px]">
        <svg width="24" height="22" viewBox="0 0 24 22"><circle cx="14" cy="11" r="9.500" fill="#f6a82b" /><path d="M6 4h11M4 8h14M2 12h13M1 16h12" stroke="#fbc75a" strokeWidth="2.500" strokeLinecap="round" /><path d="M4 6h8M2 10h10M1 14h10" stroke="#444" strokeWidth="1" /></svg>
        30°C
      </button>
      <div className="flex items-center gap-[7px]">
        <svg width="15" height="12" fill="none" stroke="#fff" strokeWidth="1.200"><path d="M3 9l4.500-5L12 9" /></svg>
        <svg width="16" height="16" viewBox="0 0 16 16" fill="none" stroke="#fff"><rect x="3.500" y="4.500" width="7" height="7" rx="2" /><circle cx="7" cy="8" r="1" /><path d="M11 7l2-1v4l-2-1M4 2.500q3-2 6 0M4 13.500q3 2 6 0" /></svg>
        <svg width="16" height="12" viewBox="0 0 16 12"><path d="M3 11a3 3 0 010-5.500A4.500 4.500 0 0111 3.500 3.800 3.800 0 0112 11z" fill="#eee" /></svg>
        <svg width="14" height="16" viewBox="0 0 14 16"><rect x="4" y="0" width="6" height="10" rx="2.500" fill="#fff" /><path d="M2.500 6v3q0 3 4.500 3t4.500-3V6M7 12v3M4 15h6" stroke="#fff" fill="none" /></svg>
        <svg width="17" height="12" viewBox="0 0 17 12" fill="none" stroke="#fff"><rect x="5.500" y="3.500" width="9" height="6" /><path d="M7 5h6v3H7z" fill="#fff" /><path d="M15.500 5v3M1 2h5v3q-2 2-3 0M2.500 0v2M4.500 0v2M3.500 6v4H5" /></svg>
        <svg width="14" height="14" viewBox="0 0 14 14" fill="none" stroke="#ccc"><path d="M1 12A11 11 0 0112 2M4 12.500a8 8 0 018-7.500M7 13a5 5 0 015-5" /><circle cx="11" cy="12" r="1" fill="#fff" /></svg>
        <svg width="15" height="13" viewBox="0 0 15 13" fill="none" stroke="#fff"><path d="M1 4.500h2l4-3.500v11L3 8.500H1zM9.500 4.500l4 4M13.500 4.500l-4 4" /></svg>
      </div>
      <div className="ml-[9px] flex w-[56px] flex-col items-center justify-center text-[11px] leading-[17px] whitespace-nowrap">
        <time>9:44 pm</time>
        <time>04/09/2023</time>
      </div>
      <button type="button" aria-label="Action center" className="mr-[17px] ml-[16px]">
        <svg width="18" height="17" viewBox="0 0 18 17" fill="none" stroke="#fff" strokeWidth="1.200"><path d="M1 1h15v11h-5l-2.500 3L6 12H1z" /></svg>
      </button>
      <span className="mr-[3px] w-px bg-[#777]" />
    </nav>
  );
}

export default function App() {
  const [open] = useState(true);

  return (
    <div className="flex h-screen flex-col overflow-hidden border-x border-black bg-[#f0f0f0] font-['Open_Sans','Noto_Sans',sans-serif] text-[11px] text-[#111]">
      <header className="flex h-[22px] shrink-0 items-center bg-white pl-[4px] text-[#9a9a9a]">
        <svg width="9" height="10" stroke="#222" strokeWidth="1.500"><path d="M1 9Q6 6 8 1M1 2l6 6" fill="none" /></svg>
        <h1 className="ml-2 flex-1">2109014427: XtreamMarkets-Real2 - Xtream Markets Ltd - [EURUSD.x,H1]</h1>
        <div className="flex gap-8 pr-[17px]">
          <button type="button" aria-label="Minimize"><svg width="10" height="10" stroke="#888"><path d="M0 5.500h10" /></svg></button>
          <button type="button" aria-label="Restore"><svg width="11" height="10" stroke="#888" fill="none"><path d="M1.500 2.500h6v6h-6zM3.500 2V.5h6v6H8" /></svg></button>
          <button type="button" aria-label="Close"><svg width="11" height="11" stroke="#888"><path d="M1 1l9 9M10 1l-9 9" /></svg></button>
        </div>
      </header>
      <nav className="flex h-[19px] shrink-0 items-center border-b border-[#a0a0a0] pl-1 text-[#949494]">
        <svg width="13" height="13" viewBox="0 0 13 13" fill="none" stroke="#6d9cc8"><path d="M.5 .5h8v8h-8zM3.500 4.500h9v8h-9z" fill="#eef5fb" /><path d="M5 10l2-3 2 3 2-3M2 3h5" /></svg>
        <div className="ml-2 flex gap-4">
          {["File", "View", "Insert", "Charts", "Tools", "Window", "Help"].map((m) => (
            <button key={m} type="button">{m}</button>
          ))}
        </div>
        <div className="ml-auto flex gap-[2px]">
          <button type="button" aria-label="Minimize chart" className="flex h-4 w-4 items-center justify-center bg-[#e6e6e6]"><svg width="6" height="6" stroke="#777" strokeWidth="2"><path d="M0 5h6" /></svg></button>
          <button type="button" aria-label="Restore chart" className="flex h-4 w-4 items-center justify-center bg-[#e6e6e6]"><svg width="8" height="8" stroke="#777" fill="none"><path d="M.5 3.500h5v4h-5zM2.500 3V.5h5v4H6" /></svg></button>
          <button type="button" aria-label="Close chart" className="flex h-4 w-4 items-center justify-center bg-[#e6e6e6]"><CloseX color="#777" /></button>
        </div>
      </nav>
      <div className="shrink-0"><Toolbars /></div>

      <main className="flex min-h-0 flex-1">
        <MarketWatch />
        <div className="relative flex min-w-0 flex-1 flex-col">
          <ChartWindow />
          <div className="flex h-[23px] shrink-0 pt-px pl-[5px]">
            <div className="flex-1"><Tabs items={CHART_TABS} active="EURUSD.x,H1" /></div>
            <div className="flex h-[19px] items-center gap-[15px] pr-[7px]">
              <svg width="4" height="6" fill="#999"><path d="M4 0v6L0 3z" /></svg>
              <svg width="4" height="6" fill="#999"><path d="M0 0v6l4-3z" /></svg>
            </div>
          </div>
          {open && <PropertiesDialog />}
        </div>
      </main>

      <Terminal />
      <StatusBar />
      <Taskbar />
    </div>
  );
}
